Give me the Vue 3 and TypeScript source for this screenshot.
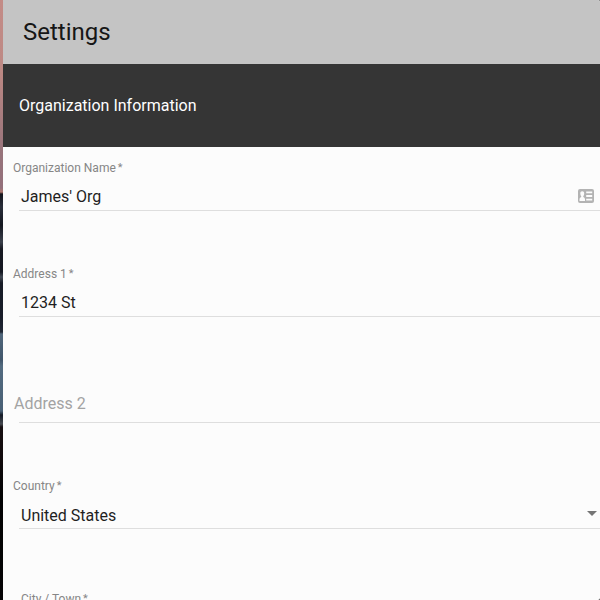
<script setup lang="ts">
interface Field {
  label: string
  value?: string
  required?: boolean
  kind?: 'contact' | 'select'
  inset?: boolean
}

const fields: Field[] = [
  { label: 'Organization Name', value: "James' Org", required: true, kind: 'contact' },
  { label: 'Address 1', value: '1234 St', required: true },
  { label: 'Address 2' },
  { label: 'Country', value: 'United States', required: true, kind: 'select' },
  { label: 'City / Town', value: '', required: true, inset: true },
]
</script>

<template>
  <div class="screen">
    <div class="backdrop"></div>
    <main class="panel">
      <header class="toolbar"><h1>Settings</h1></header>
      <section class="section-head"><h2>Organization Information</h2></section>
      <form class="form">
        <div v-for="f in fields" :key="f.label" class="field">
          <template v-if="f.value !== undefined">
            <div class="label" :class="{ inset: f.inset }">
              <span>{{ f.label }}</span><span v-if="f.required" class="star">*</span>
            </div>
            <div class="control" :class="f.kind">
              <span>{{ f.value }}</span>
              <svg v-if="f.kind === 'contact'" class="card" viewBox="0 0 16 14">
                <rect width="16" height="14" rx="2" fill="#b3b3b3" />
                <path fill="#fcfcfc" d="M4.2 2.2C5.5 2.2 6.2 3.1 6.2 4.5C6.2 5.7 5.8 6.6 5.3 7.1V8C6.5 8.5 7 9.2 7 10.5V12H1.5V10.5C1.5 9.2 2 8.5 3.2 8V7.1C2.7 6.6 2.3 5.7 2.3 4.5C2.3 3.1 2.9 2.2 4.2 2.2ZM8.2 2.5H14.2V4.2H8.2ZM8.2 6.1H14.2V7.9H8.2ZM8.2 9.8H14.2V11.5H8.2Z" />
              </svg>
              <svg v-if="f.kind === 'select'" class="arrow" viewBox="0 0 10 5">
                <path fill="#757575" d="M0 0H10L5 5Z" />
              </svg>
            </div>
          </template>
          <div v-else class="placeholder">{{ f.label }}</div>
          <div class="line"></div>
        </div>
      </form>
    </main>
  </div>
</template>

<style>
body {
  overflow: hidden;
}
</style>

<style scoped>
.screen {
  display: flex;
  width: 600px;
  height: 600px;
  overflow: hidden;
  font-family: Roboto, "Liberation Sans", sans-serif;
  color: #1f1f1f;
  background: #333;
}
.backdrop {
  flex: 0 0 3px;
  background: linear-gradient(
    #c38b86 0, #bd8984 70px, #98747b 150px, #93707b 188px, #b0786f 192px,
    #15161e 194px, #292e3a 207px, #151720 225px, #3b404b 242px, #171922 249px,
    #141721 272px, #414853 277px, #171b26 283px, #181d29 317px, #202735 332px,
    #51677c 334px, #41566b 360px, #536b80 366px, #496075 411px,
    #151b26 415px, #454950 424px, #170f12 427px, #100a0c 460px, #020203 500px, #050405 600px
  );
}
.panel {
  flex: 1;
  min-width: 0;
  overflow: hidden;
  border-radius: 0 2px 2px 0;
  background: #fcfcfc;
}
.toolbar {
  display: flex;
  align-items: center;
  height: 64px;
  padding-left: 20px;
  background: #c4c4c4;
}
h1 {
  margin: 0;
  font-size: 24px;
  font-weight: 400;
  line-height: 32px;
  color: #161616;
}
.section-head {
  display: flex;
  align-items: center;
  height: 83px;
  padding-left: 16px;
  background: #353535;
}
h2 {
  margin: 0;
  font-size: 16px;
  font-weight: 400;
  line-height: 24px;
  color: #fff;
}
.field {
  display: flex;
  flex-direction: column;
  height: 106px;
}
.label {
  display: flex;
  height: 16px;
  margin-top: 13px;
  padding-left: 10px;
  font-size: 12px;
  line-height: 16px;
  color: #868686;
}
.label.inset {
  margin-top: 20px;
  padding-left: 18px;
}
.star {
  margin-left: 2px;
  font-size: 11px;
  line-height: 15px;
}
.control {
  display: flex;
  align-items: center;
  justify-content: space-between;
  height: 24px;
  margin-top: 9px;
  padding: 0 6px 0 18px;
  font-size: 16px;
  line-height: 24px;
}
.control.select {
  height: 26px;
  padding-right: 3px;
}
.card {
  width: 16px;
  height: 14px;
  margin-bottom: 2px;
}
.arrow {
  width: 10px;
  height: 5px;
  margin-bottom: 5px;
}
.placeholder {
  height: 24px;
  margin-top: 33px;
  padding-left: 11px;
  font-size: 16px;
  line-height: 24px;
  color: #a3a3a3;
}
.line {
  height: 1px;
  margin: auto 0 42px 16px;
  background: #dedede;
}
</style>
